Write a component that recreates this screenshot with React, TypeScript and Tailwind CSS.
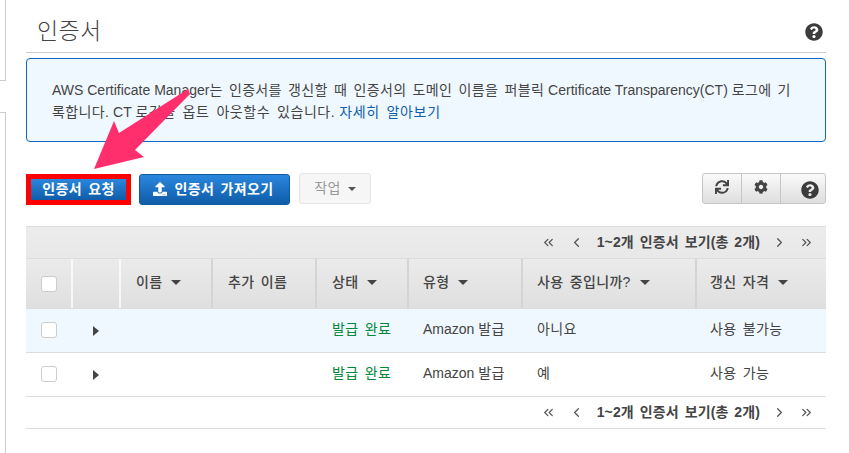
import { ChevronLeft, ChevronRight, ChevronsLeft, ChevronsRight } from 'lucide-react';
import { FaCog, FaQuestionCircle, FaSync, FaUpload } from 'react-icons/fa';

const FONT = "font-['Liberation_Sans','Noto_Sans_CJK_KR',sans-serif]";
// Hangul in the reference sits wider than Noto's, so Korean runs get extra spacing
const KO = 'tracking-[0.35px] [word-spacing:2px]';

function Caret() {
  return (
    <span className="ml-[9px] inline-block h-0 w-0 border-x-[5px] border-t-[5px] border-x-transparent border-t-[#444]" />
  );
}

function Checkbox() {
  return <span className="block h-4 w-4 rounded-[3px] border border-[#ccc] bg-white" />;
}

function Pager({ className }: { className: string }) {
  return (
    <div className={`flex items-center justify-end pr-[12px] text-[#444] ${className}`}>
      <ChevronsLeft size={15} strokeWidth={2} className="text-[#555]" />
      <ChevronLeft size={15} strokeWidth={2} className="ml-[13px] text-[#555]" />
      <span className="ml-[13px] text-[14px] font-bold tracking-[0.1px] [word-spacing:2px]">1~2개 인증서 보기(총 2개)</span>
      <ChevronRight size={15} strokeWidth={2} className="ml-[12px] text-[#555]" />
      <ChevronsRight size={15} strokeWidth={2} className="ml-[12px] text-[#555]" />
    </div>
  );
}

const columns = [
  { label: '이름', width: 'w-[92px]', pad: 'pl-[15px]', caret: true },
  { label: '추가 이름', width: 'w-[104px]', pad: 'pl-[15px]', caret: false },
  { label: '상태', width: 'w-[92px]', pad: 'pl-[15px]', caret: true },
  { label: '유형', width: 'w-[114px]', pad: 'pl-[14px]', caret: true },
  { label: '사용 중입니까?', width: 'w-[174px]', pad: 'pl-[14px]', caret: true },
  { label: '갱신 자격', width: 'flex-1', pad: 'pl-[13px]', caret: true },
];

function Row({ inUse, renew, highlighted }: { inUse: string; renew: string; highlighted?: boolean }) {
  return (
    <div className={`flex h-[44px] items-center border-b border-[#ddd] text-[14px] text-[#444] ${highlighted ? 'bg-[#f0f8ff]' : 'bg-white'}`}>
      <div className="w-[47px] pb-[2px] pl-[15px]">
        <Checkbox />
      </div>
      <div className="w-[48px] pl-[20px]">
        <span className="block h-0 w-0 border-y-[5px] border-l-[6px] border-y-transparent border-l-[#444]" />
      </div>
      <div className="w-[196px]" />
      <div className={`w-[92px] pb-[2px] pl-[15px] text-[#00883a] ${KO}`}>발급 완료</div>
      <div className="w-[114px] pb-[2px] pl-[14px]">
        Amazon <span className={KO}>발급</span>
      </div>
      <div className={`w-[174px] pb-[2px] pl-[14px] ${KO}`}>{inUse}</div>
      <div className={`flex-1 pb-[2px] pl-[13px] ${KO}`}>{renew}</div>
    </div>
  );
}

export default function App() {
  return (
    <div className={`relative flex h-[453px] w-[849px] overflow-hidden bg-white ${FONT}`}>
      <div className="flex w-[6px] flex-col">
        <div className="h-[81px] border-r border-b border-[#ccc]" />
        <div className="mt-[31px] flex-1 border-t border-r border-[#ccc]" />
      </div>

      <main className="ml-[20px] w-[800px]">
        <div className="flex h-[53px] items-start justify-between border-b border-[#ccc] pr-[3px] pt-[16px]">
          <h1 className="pl-[11px] text-[23px] leading-[30px] font-light tracking-[0.4px] text-[#444]">인증서</h1>
          <FaQuestionCircle size={18} className="mt-[7px] text-[#3c3c3c]" />
        </div>

        <div className="mt-[5px] h-[84px] rounded-[4px] border border-[#0f67bb] bg-[#f0f8ff] pt-[20px] pr-[24px] pl-[25px] text-[14px] leading-[22px] text-[#444]">
          AWS Certificate Manager
          <span className={KO}>는 인증서를 갱신할 때 인증서의 도메인 이름을 퍼블릭</span>{' '}
          Certificate Transparency(CT){' '}
          <span className={KO}>로그에 기록합니다.</span>{' '}
          CT{' '}
          <span className="tracking-[0.55px] [word-spacing:2.5px]">로깅을 옵트 아웃할수 있습니다.</span>{' '}
          <span className="tracking-[0.7px] [word-spacing:2px] text-[#0d5fa8]">자세히 알아보기</span>
        </div>

        <div className="mt-[32px] flex items-start">
          <button className={`flex h-[31px] w-[105px] items-center justify-center border-[5px] border-[#f00] bg-gradient-to-b from-[#2a87de] to-[#0f5ca8] pb-[1px] text-[14px] font-bold text-white ${KO}`}>
            인증서 요청
          </button>
          <button className={`ml-[8px] flex h-[31px] w-[151px] items-center justify-center rounded-[3px] border border-[#12589f] bg-gradient-to-b from-[#2a87de] to-[#0f5ca8] pr-[3px] pb-[1px] text-[14px] font-bold text-white ${KO}`}>
            <FaUpload size={14} className="mr-[8px]" />
            인증서 가져오기
          </button>
          <button className={`ml-[9px] flex h-[31px] w-[72px] -translate-y-px items-center justify-center rounded-[3px] border border-[#e5e5e5] bg-[#f6f6f6] text-[14px] text-[#999] ${KO}`}>
            작업
            <span className="ml-[7px] h-0 w-0 border-x-[4px] border-t-[4px] border-x-transparent border-t-[#555]" />
          </button>
          <div className="ml-auto flex h-[31px] -translate-y-px overflow-hidden rounded-[3px] border border-[#c6c6c6] bg-gradient-to-b from-[#fafafa] to-[#dedede] text-[#444]">
            <div className="flex w-[39px] justify-center border-r border-[#c6c6c6] pt-[6px]">
              <FaSync size={14} />
            </div>
            <div className="flex w-[39px] justify-center border-r border-[#c6c6c6] pt-[6px]">
              <FaCog size={14} />
            </div>
            <div className="flex w-[44px] justify-end pt-[7px] pr-[6px]">
              <FaQuestionCircle size={18} className="text-[#3c3c3c]" />
            </div>
          </div>
        </div>

        <div className="mt-[21px]">
          <Pager className="h-[32px] border-t border-[#ddd] bg-gradient-to-b from-[#ececec] to-[#e8e8e8]" />
          <div className={`flex h-[51px] border-y border-[#dcdcdc] bg-gradient-to-b from-[#ebebeb] to-[#dfdfdf] text-[14px] font-medium text-[#444] ${KO}`}>
            <div className="flex w-[47px] items-center border-r-2 border-white/70 pl-[15px]">
              <Checkbox />
            </div>
            <div className="w-[48px] border-r-2 border-white/70" />
            {columns.map((col) => (
              <div
                key={col.label}
                className={`flex items-center pb-[3px] ${col.pad} ${col.width} ${col.width === 'flex-1' ? '' : 'border-r-2 border-[#d4d4d4]'}`}
              >
                {col.label}
                {col.caret && <Caret />}
              </div>
            ))}
          </div>
          <Row inUse="아니요" renew="사용 불가능" highlighted />
          <Row inUse="예" renew="사용 가능" />
          <Pager className="h-[32px] border-b border-[#ddd]" />
        </div>
      </main>

      <svg className="pointer-events-none absolute top-0 left-0" width="849" height="453" viewBox="0 0 849 453">
        <polygon points="188,89 119,133 114,121 94,169 144,157 135,150 190,94" fill="#ff2e6c" />
      </svg>
    </div>
  );
}
